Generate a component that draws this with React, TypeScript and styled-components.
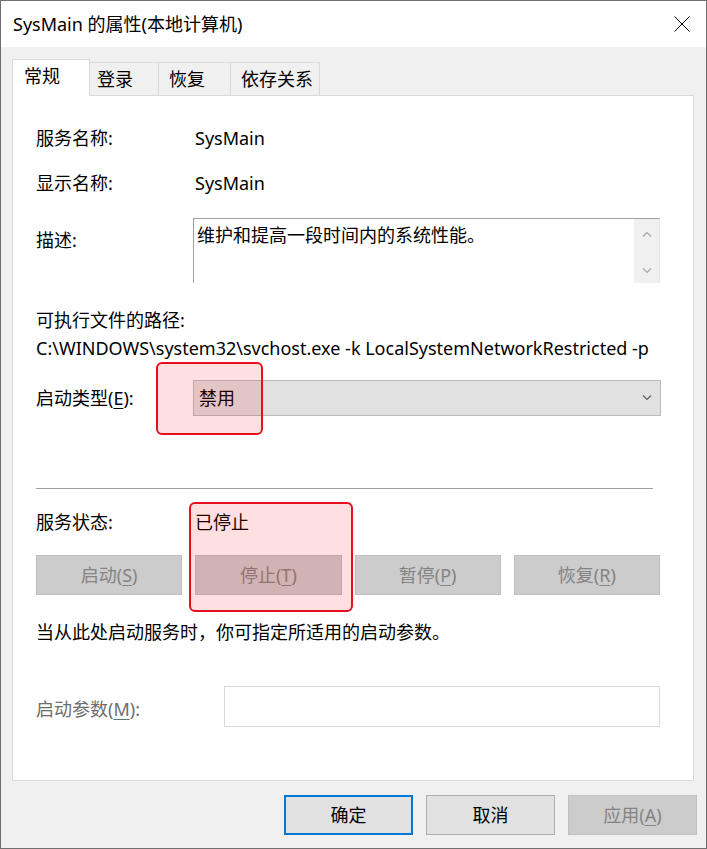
import styled, { createGlobalStyle } from "styled-components";

const GlobalStyle = createGlobalStyle`
  html, body {
    margin: 0;
    padding: 0;
    background: #fff;
  }
  body {
    font-family: "Segoe UI", "Noto Sans", "Noto Sans CJK SC", sans-serif;
    font-size: 18px;
    color: #000;
  }
`;

const Window = styled.div`
  width: 707px;
  height: 849px;
  box-sizing: border-box;
  border: 1px solid #6f6f6f;
  background: #f0f0f0;
  display: flex;
  flex-direction: column;
`;

const TitleBar = styled.div`
  height: 46px;
  flex-shrink: 0;
  background: #fff;
  display: flex;
  align-items: center;
  justify-content: space-between;
  padding: 0 16px 0 12px;
`;

const Title = styled.div`
  font-size: 18px;
  line-height: 24px;
`;

const TabStrip = styled.div`
  display: flex;
  align-items: flex-end;
  height: 36px;
  margin: 12px 0 0 11px;
`;

const Tab = styled.div<{ $active?: boolean; $w: number; $pl: number }>`
  box-sizing: border-box;
  width: ${(p) => p.$w}px;
  height: ${(p) => (p.$active ? 37 : 33)}px;
  margin-bottom: ${(p) => (p.$active ? -1 : 0)}px;
  padding: 4px 0 0 ${(p) => p.$pl}px;
  line-height: 24px;
  background: ${(p) => (p.$active ? "#fff" : "#f0f0f0")};
  border: 1px solid #d9d9d9;
  border-bottom: none;
  margin-left: ${(p) => (p.$active ? 0 : -1)}px;
  position: relative;
  z-index: ${(p) => (p.$active ? 1 : 0)};
`;

const Panel = styled.div`
  box-sizing: border-box;
  height: 686px;
  margin: 0 12px 0 11px;
  border: 1px solid #d9d9d9;
  background: #fff;
  padding: 0 23px;
  display: flex;
  flex-direction: column;
`;

const Row = styled.div<{ $mt: number; $h: number; $top?: boolean }>`
  position: relative;
  display: flex;
  align-items: ${(p) => (p.$top ? "flex-start" : "center")};
  margin-top: ${(p) => p.$mt}px;
  height: ${(p) => p.$h}px;
  flex-shrink: 0;
`;

const Label = styled.div<{ $w: number; $pt?: number; $muted?: boolean }>`
  width: ${(p) => p.$w}px;
  flex-shrink: 0;
  line-height: 28px;
  padding-top: ${(p) => p.$pt ?? 0}px;
  color: ${(p) => (p.$muted ? "#6d6d6d" : "#000")};
  white-space: nowrap;
`;

const Value = styled.div`
  line-height: 28px;
  white-space: nowrap;
`;

const DescBox = styled.div`
  box-sizing: border-box;
  width: 467px;
  height: 65px;
  border-top: 1px solid #a0a0a0;
  border-left: 1px solid #a0a0a0;
  border-right: 1px solid #e6e6e6;
  display: flex;
`;

const DescText = styled.div`
  flex: 1;
  padding: 2px 0 0 3px;
  line-height: 28px;
`;

const ScrollBar = styled.div`
  width: 25px;
  background: #f0f0f0;
  display: flex;
  flex-direction: column;
  align-items: center;
  justify-content: space-between;
  padding: 12px 0 9px;
`;

const Combo = styled.div`
  box-sizing: border-box;
  width: 468px;
  height: 36px;
  border: 1px solid #bcbcbc;
  background: #e1e1e1;
  display: flex;
  align-items: center;
  justify-content: space-between;
  padding: 0 8px 0 5px;
  line-height: 28px;
`;

const Highlight = styled.div<{ $l: number; $t: number; $w: number; $h: number }>`
  position: absolute;
  left: ${(p) => p.$l}px;
  top: ${(p) => p.$t}px;
  width: ${(p) => p.$w}px;
  height: ${(p) => p.$h}px;
  box-sizing: border-box;
  border: 2px solid #e8101f;
  border-radius: 6px;
  background: rgba(255, 0, 0, 0.12);
  pointer-events: none;
  z-index: 2;
`;

const Separator = styled.div`
  margin-top: 72px;
  width: 617px;
  border-top: 1px solid #a0a0a0;
`;

const StatusBlock = styled.div`
  position: relative;
  display: flex;
  flex-direction: column;
`;

const ServiceButtons = styled.div`
  display: grid;
  grid-template-columns: repeat(4, 1fr);
  gap: 13px;
  width: 624px;
  margin-top: 19px;
`;

const WinButton = styled.button<{ $w?: number; $default?: boolean; $disabled?: boolean }>`
  box-sizing: border-box;
  height: 40px;
  width: ${(p) => (p.$w ? `${p.$w}px` : "auto")};
  font-family: inherit;
  font-size: 18px;
  line-height: 24px;
  padding: 0;
  border-radius: 0;
  color: ${(p) => (p.$disabled ? "#838383" : "#000")};
  background: ${(p) => (p.$disabled ? "#cccccc" : "#e1e1e1")};
  border: ${(p) =>
    p.$default ? "2px solid #0078d7" : p.$disabled ? "1px solid #bfbfbf" : "1px solid #adadad"};
`;

const Note = styled.div`
  margin-top: 23px;
  line-height: 28px;
  white-space: nowrap;
`;

const ParamField = styled.div`
  box-sizing: border-box;
  width: 436px;
  height: 41px;
  border: 1px solid #d9d9d9;
  background: #fff;
`;

const Key = styled.span`
  text-decoration: underline;
  text-underline-offset: 3px;
  text-decoration-thickness: 1px;
`;

const ButtonBar = styled.div`
  display: flex;
  justify-content: flex-end;
  gap: 13px;
  margin-top: 14px;
  padding-right: 9px;
`;

function Chevron({ up, color }: { up?: boolean; color: string }) {
  return (
    <svg width="10" height="6" viewBox="0 0 10 6">
      <path
        d={up ? "M1 5.5 L5 1.5 L9 5.5" : "M1 0.5 L5 4.5 L9 0.5"}
        fill="none"
        stroke={color}
        strokeWidth="1.2"
      />
    </svg>
  );
}

function CloseIcon() {
  return (
    <svg width="16" height="16" viewBox="0 0 16 16">
      <path d="M0.5 0.5 L15.5 15.5 M15.5 0.5 L0.5 15.5" stroke="#000" strokeWidth="1" />
    </svg>
  );
}

export default function App() {
  return (
    <>
      <GlobalStyle />
      <Window>
        <TitleBar>
          <Title>SysMain 的属性(本地计算机)</Title>
          <CloseIcon />
        </TitleBar>

        <TabStrip>
          <Tab $active $w={78} $pl={11}>常规</Tab>
          <Tab $w={70} $pl={7}>登录</Tab>
          <Tab $w={73} $pl={10}>恢复</Tab>
          <Tab $w={90} $pl={10}>依存关系</Tab>
        </TabStrip>

        <Panel>
          <Row $mt={28} $h={28}>
            <Label $w={159}>服务名称:</Label>
            <Value>SysMain</Value>
          </Row>
          <Row $mt={17} $h={28}>
            <Label $w={159}>显示名称:</Label>
            <Value>SysMain</Value>
          </Row>
          <Row $mt={21} $h={65} $top>
            <Label $w={157} $pt={8}>描述:</Label>
            <DescBox>
              <DescText>维护和提高一段时间内的系统性能。</DescText>
              <ScrollBar>
                <Chevron up color="#a6a6a6" />
                <Chevron color="#a6a6a6" />
              </ScrollBar>
            </DescBox>
          </Row>
          <Row $mt={23} $h={28}>
            <Label $w={300}>可执行文件的路径:</Label>
          </Row>
          <Row $mt={0} $h={28}>
            <Value>C:\WINDOWS\system32\svchost.exe -k LocalSystemNetworkRestricted -p</Value>
          </Row>
          <Row $mt={18} $h={36}>
            <Label $w={157}>
              启动类型(<Key>E</Key>):
            </Label>
            <Combo>
              <span>禁用</span>
              <Chevron color="#606060" />
            </Combo>
            <Highlight $l={120} $t={-18} $w={107} $h={73} />
          </Row>

          <Separator />

          <StatusBlock>
            <Row $mt={19} $h={28}>
              <Label $w={159}>服务状态:</Label>
              <Value>已停止</Value>
            </Row>
            <ServiceButtons>
              <WinButton $disabled>
                启动(<Key>S</Key>)
              </WinButton>
              <WinButton $disabled>
                停止(<Key>T</Key>)
              </WinButton>
              <WinButton $disabled>
                暂停(<Key>P</Key>)
              </WinButton>
              <WinButton $disabled>
                恢复(<Key>R</Key>)
              </WinButton>
            </ServiceButtons>
            <Highlight $l={153} $t={13} $w={164} $h={110} />
          </StatusBlock>

          <Note>当从此处启动服务时，你可指定所适用的启动参数。</Note>

          <Row $mt={40} $h={41}>
            <Label $w={188} $pt={5} $muted>
              启动参数(<Key>M</Key>):
            </Label>
            <ParamField />
          </Row>
        </Panel>

        <ButtonBar>
          <WinButton $w={129} $default>确定</WinButton>
          <WinButton $w={129}>取消</WinButton>
          <WinButton $w={129} $disabled>
            应用(<Key>A</Key>)
          </WinButton>
        </ButtonBar>
      </Window>
    </>
  );
}
